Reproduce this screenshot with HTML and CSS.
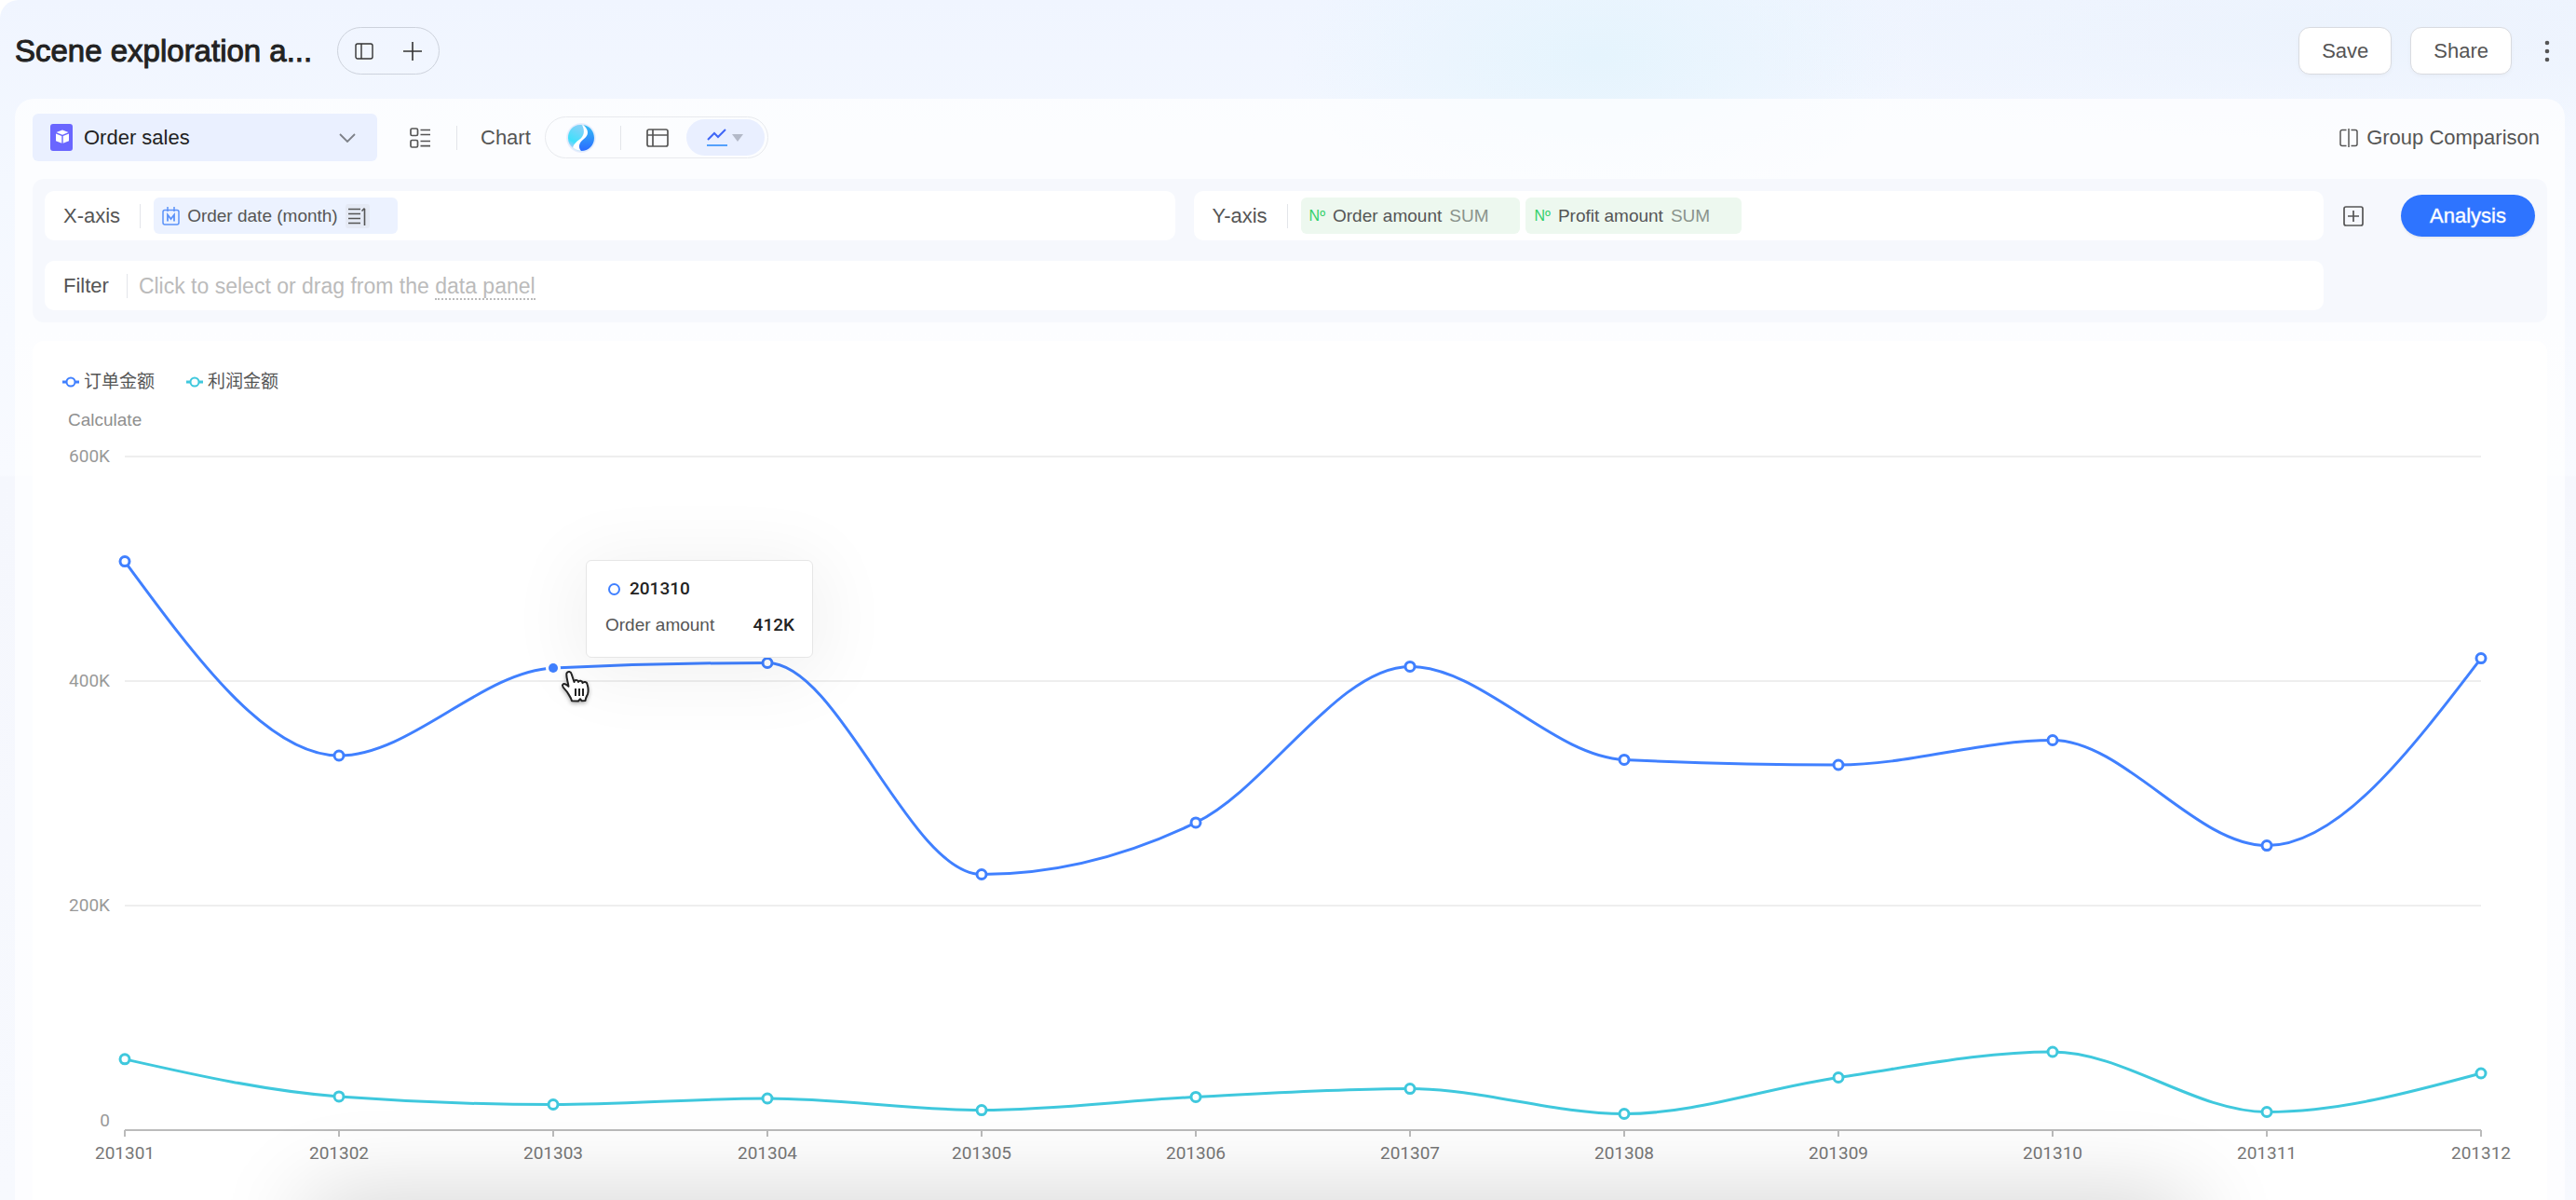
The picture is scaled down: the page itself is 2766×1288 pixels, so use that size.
FILE: index.html
```html
<!DOCTYPE html>
<html lang="en">
<head>
<meta charset="utf-8">
<meta name="viewport" content="width=device-width, initial-scale=1">
<title>Scene exploration</title>
<link rel="stylesheet" href="styles.css">
</head>
<body>
<div class="app">
  <header class="header">
    <h1 class="title">Scene exploration a...</h1>
    <div class="title-tools">
      <button class="icon-btn" type="button" aria-label="Toggle panel">
        <svg width="20" height="20" viewBox="0 0 20 20" fill="none" stroke="#333" stroke-width="1.4"><rect x="1" y="2" width="18" height="16" rx="2"/><path d="M7 2v16"/></svg>
      </button>
      <button class="icon-btn" type="button" aria-label="Add">
        <svg width="20" height="20" viewBox="0 0 20 20" fill="none" stroke="#333" stroke-width="1.6"><path d="M10 0v20M0 10h20"/></svg>
      </button>
    </div>
    <div class="header-actions">
      <button class="btn" type="button">Save</button>
      <button class="btn" type="button">Share</button>
      <button class="icon-btn more" type="button" aria-label="More">
        <svg width="6" height="24" viewBox="0 0 6 24" fill="#555"><circle cx="3" cy="3" r="2.3"/><circle cx="3" cy="12" r="2.3"/><circle cx="3" cy="21" r="2.3"/></svg>
      </button>
    </div>
  </header>

  <main class="panel">
    <div class="toolbar">
      <button class="dataset" type="button">
        <svg width="24" height="29" viewBox="0 0 24 29"><rect width="24" height="29" rx="3" fill="#6a66ff"/><path fill="#fff" d="M13 6.5l6.500 2.500-6.500 2.700-6.500-2.700zM6 10.400l6.300 2.600v7.800L6 18.300zM20 10.400v7.900l-6.300 2.500V13z"/></svg>
        <span>Order sales</span>
        <svg class="chevron" width="18" height="10" viewBox="0 0 18 10" fill="none" stroke="#7d8088" stroke-width="1.8"><path d="M1 1l8 8 8-8"/></svg>
      </button>
      <button class="icon-btn list-btn" type="button" aria-label="Field list">
        <svg width="22" height="22" viewBox="0 0 22 22" fill="none" stroke="#555" stroke-width="1.700"><rect x="1" y="1" width="7.500" height="7.500" rx="1.500"/><rect x="1" y="13.500" width="7.500" height="7.500" rx="1.500"/><path d="M11.500 2.500H22M11.500 7.500H22M11.500 14.500H22M11.500 19.700H22"/></svg>
      </button>
      <span class="divider"></span>
      <span class="chart-label">Chart</span>
      <div class="chart-types">
        <button class="icon-btn orb" type="button" aria-label="Smart chart">
          <svg width="32" height="32" viewBox="0 0 32 32">
            <defs>
              <linearGradient id="orbLeft" x1="0" y1="1" x2="0.400" y2="0"><stop offset="0" stop-color="#c9c4fb"/><stop offset="0.350" stop-color="#3fe0fb"/><stop offset="1" stop-color="#7fd2f8"/></linearGradient>
              <linearGradient id="orbRight" x1="0.500" y1="0" x2="0.500" y2="1"><stop offset="0" stop-color="#35bdf5"/><stop offset="1" stop-color="#2a6bff"/></linearGradient>
              <radialGradient id="orbGlow"><stop offset="0.800" stop-color="#b9e8fd"/><stop offset="1" stop-color="#e3e3fb" stop-opacity="0.500"/></radialGradient>
            </defs>
            <circle cx="16" cy="16" r="16" fill="url(#orbGlow)"/>
            <circle cx="16" cy="16" r="13.500" fill="#fff"/>
            <path fill="url(#orbLeft)" d="M17 2.200C8 1 2 8 2 16c0 5 2 8 5 10.500 1-4 3.500-6 7.500-9 4.500-3.500 6-9 2.500-15.300z"/>
            <path fill="url(#orbRight)" d="M18.500 2.200C25 3 30 9 30 16c0 8-6 14-14 14-3.500-4-2.500-8.500 2.500-12.500 6-4.500 6-10 0-15.300z"/>
          </svg>
        </button>
        <span class="divider"></span>
        <button class="icon-btn table-btn" type="button" aria-label="Table">
          <svg width="24" height="20" viewBox="0 0 24 20" fill="none" stroke="#555" stroke-width="1.700"><rect x="1" y="1" width="22" height="18" rx="2"/><path d="M1 7h22M7 1v18"/></svg>
        </button>
        <button class="line-btn" type="button" aria-label="Line chart">
          <svg width="40" height="20" viewBox="0 0 40 20" fill="none"><path d="M1 12l7-7 4 4 8-8" stroke="#3f66f6" stroke-width="2"/><path d="M0 18h22" stroke="#54a0fb" stroke-width="2"/><path d="M27 6h12l-6 8z" fill="#b3b9c8"/></svg>
        </button>
      </div>
      <button class="compare" type="button">
        <svg width="20" height="20" viewBox="0 0 20 20" fill="none" stroke="#555" stroke-width="1.500"><path d="M7.500 1.500H3a2 2 0 0 0-2 2v13a2 2 0 0 0 2 2h4.500M10 0v20M12.500 1.500H17a2 2 0 0 1 2 2v13a2 2 0 0 1-2 2h-4.500"/></svg>
        <span>Group Comparison</span>
      </button>
    </div>

    <section class="config">
      <div class="fields">
        <div class="field">
          <span class="field-label">X-axis</span>
          <span class="divider"></span>
          <span class="chip chip-date">
            <svg width="19" height="20" viewBox="0 0 19 20" fill="none" stroke="#5b92f9" stroke-width="1.500"><rect x="1" y="3.500" width="17" height="15.500" rx="2"/><path d="M6 0v5M13 0v5"/><path d="M6 15.500V8.500L9.500 13 13 8.500v7" stroke-width="1.800"/></svg>
            <span>Order date (month)</span>
            <span class="sort">
              <svg width="20" height="20" viewBox="0 0 20 20" fill="none" stroke="#555" stroke-width="1.600"><path d="M0 2.500h13M0 7.500h13M0 12.500h13M0 17.500h13M17.500 20V2M14.500 4.500L17.500 1.500"/></svg>
            </span>
          </span>
        </div>
        <div class="field">
          <span class="field-label">Y-axis</span>
          <span class="divider"></span>
          <span class="chip chip-num"><span class="num">Nº</span><span>Order amount</span><span class="agg">SUM</span></span>
          <span class="chip chip-num"><span class="num">Nº</span><span>Profit amount</span><span class="agg">SUM</span></span>
        </div>
        <div class="field filter">
          <span class="field-label">Filter</span>
          <span class="divider"></span>
          <span class="hint">Click to select or drag from the <a class="hint-link" href="#data">data panel</a></span>
        </div>
      </div>
      <div class="config-actions">
        <button class="icon-btn" type="button" aria-label="Add field">
          <svg width="22" height="22" viewBox="0 0 22 22" fill="none" stroke="#555" stroke-width="1.700"><rect x="1" y="1" width="20" height="20" rx="2"/><path d="M11 5v12M5 11h12"/></svg>
        </button>
        <button class="analysis" type="button">Analysis</button>
      </div>
    </section>

    <section class="card">
      <div class="legend">
        <span class="legend-item"><svg width="18" height="12" viewBox="0 0 18 12" fill="none" stroke="#4080ff" stroke-width="2"><path d="M0 6h4M14 6h4" stroke-width="3"/><circle cx="9" cy="6" r="4.500"/></svg>订单金额</span>
        <span class="legend-item"><svg width="18" height="12" viewBox="0 0 18 12" fill="none" stroke="#3fc8dd" stroke-width="2"><path d="M0 6h4M14 6h4" stroke-width="3"/><circle cx="9" cy="6" r="4.500"/></svg>利润金额</span>
      </div>
      <div class="plot">
        <svg id="chart" class="chart" viewBox="0 0 2700 840" role="img" aria-label="Order amount and profit amount by month">
          <text class="axis-name" x="38" y="32">Calculate</text>
        </svg>
        <div class="tooltip">
          <div class="tooltip-title"><span class="ring"></span>201310</div>
          <div class="tooltip-row"><span>Order amount</span><strong>412K</strong></div>
        </div>
        <svg class="cursor" width="32" height="37" viewBox="0 0 32 37" fill="#fff" stroke="#222" stroke-width="2" stroke-linejoin="round"><path d="M6.500 3.500C8 1 11 2 11.500 4l3 9c.5-3 4-2.500 4.500 0 .8-2 4.200-1.600 4.600 1 1-1.700 4.600-1.500 5 1.500 1.200 4 1.400 7 .4 10.500-.7 2-2 3-2.500 7l-4 .2-1.500-2-2 2.300-7-.2c-1-4-3-6-5-9.500-1.500-2.500-5.500-5-5-7.500 1-2.500 4-1 6.500 1.500C8 13 5.500 7 6.500 3.500z"/><path d="M16 20v8M20 20v8M24 20v8" fill="none"/></svg>
      </div>
    </section>
  </main>
  <div class="window-shadow"></div>
</div>
<script src="script.js"></script>
</body>
</html>
```
FILE: styles.css
```css
* { box-sizing: border-box; }

body {
  margin: 0;
  background: #fff;
  color: #555;
  font: 22px/28px "Liberation Sans", "Noto Sans CJK SC", sans-serif;
}

button {
  padding: 0;
  border: 0;
  background: none;
  color: inherit;
  font: inherit;
}

svg { display: block; flex: none; }

.app {
  position: relative;
  display: flex;
  flex-direction: column;
  min-height: 100vh;
  padding: 0 12px 0 16px;
  overflow: hidden;
  border-top-left-radius: 20px;
  background:
    radial-gradient(ellipse 330px 170px at 62% 60px, #e5f4fd, transparent),
    radial-gradient(ellipse 700px 120px at 91% 30px, #ecf3fd, transparent),
    linear-gradient(#f0f5ff, #f4f8ff 200px, #f8faff 510px, #f5f7fd 512px, #f7f9fe);
}

.header {
  display: flex;
  align-items: center;
  height: 106px;
  padding-top: 3px;
}

.title {
  margin: 0;
  width: 318px;
  white-space: nowrap;
  color: #222;
  font-size: 33px;
  line-height: 40px;
  font-weight: 400;
  -webkit-text-stroke: 1px #222;
}

.title-tools {
  display: flex;
  justify-content: space-between;
  align-items: center;
  width: 110px;
  height: 51px;
  margin-left: 28px;
  padding: 0 18px;
  border: 1px solid #cdd2dc;
  border-radius: 26px;
}

.header-actions {
  display: flex;
  align-items: center;
  gap: 20px;
  margin-left: auto;
}

.btn {
  height: 51px;
  padding: 0 24px;
  border: 1px solid #d9dbe0;
  border-radius: 12px;
  background: #fff;
  box-shadow: 0 2px 4px rgba(0, 0, 0, .03);
}

.more { margin: 0 16px 0 15px; }

.panel {
  display: flex;
  flex: 1;
  flex-direction: column;
  padding: 16px 19px 0;
  border-radius: 20px 20px 0 0;
  background: rgba(255, 255, 255, .7);
}

.toolbar {
  display: flex;
  align-items: center;
  height: 51px;
}

.dataset {
  display: flex;
  align-items: center;
  gap: 12px;
  width: 370px;
  height: 51px;
  padding: 0 23px 0 19px;
  border-radius: 6px;
  background: #eaf0ff;
  color: #222;
}

.chevron { margin-left: auto; }

.divider {
  flex: none;
  width: 1px;
  height: 26px;
  background: #e3e5ea;
}

.list-btn { margin: 0 28px 0 35px; }

.chart-label { margin: 0 15px 0 25px; }

.chart-types {
  display: flex;
  align-items: center;
  width: 240px;
  height: 45px;
  padding: 0 3px 0 22px;
  border: 1px solid #e8eaee;
  border-radius: 23px;
}

.orb { margin-right: 26px; }

.table-btn { margin-left: 27px; }

.line-btn {
  display: flex;
  align-items: center;
  justify-content: center;
  width: 84px;
  height: 39px;
  margin-left: auto;
  border-radius: 20px;
  background: #e9efff;
}

.compare {
  display: flex;
  align-items: center;
  gap: 9px;
  margin-left: auto;
  padding-right: 8px;
}

.config {
  display: flex;
  margin-top: 19px;
  padding: 13px;
  border-radius: 12px;
  background: #f6f8fd;
}

.fields {
  display: grid;
  flex: 1;
  grid-template-columns: 1fr 1fr;
  gap: 22px 20px;
}

.field {
  display: flex;
  align-items: center;
  height: 53px;
  padding-left: 20px;
  border-radius: 10px;
  background: #fff;
}

.field-label { margin-right: 21px; }

.field .divider { margin-right: 14px; }

.filter { grid-column: 1 / -1; }

.filter .field-label { margin-right: 19px; }

.filter .divider { margin-right: 12px; }

.hint {
  color: #bbb;
  font-size: 23px;
}

.hint-link {
  border-bottom: 2px dotted #bbb;
  color: inherit;
  text-decoration: none;
}

.chip {
  display: flex;
  align-items: center;
  gap: 8px;
  height: 39px;
  padding: 0 30px 0 9px;
  border-radius: 6px;
  font-size: 19px;
}

.chip-date { background: #ecf2ff; }

.chip-num {
  margin-right: 6px;
  padding-right: 34px;
  background: #edf8ef;
}

.num {
  color: #33d06a;
  font-size: 16px;
}

.agg { color: #8a938c; }

.sort {
  display: flex;
  align-items: center;
  justify-content: center;
  width: 26px;
  height: 26px;
  border-radius: 3px;
  background: #e5eaf5;
}

.config-actions {
  display: flex;
  align-items: center;
  gap: 40px;
  height: 53px;
  margin-left: 21px;
}

.analysis {
  width: 144px;
  height: 45px;
  border-radius: 23px;
  background: #2e74ff;
  box-shadow: 0 2px 2px rgba(0, 0, 0, .06);
  color: #fff;
  -webkit-text-stroke: 1px rgba(255, 255, 255, .4);
}

.card {
  flex: 1;
  margin-top: 20px;
  padding-top: 28px;
  border-radius: 12px 12px 0 0;
  background: #fff;
}

.legend {
  display: flex;
  gap: 34px;
  height: 31px;
  padding-left: 32px;
}

.legend-item {
  display: flex;
  align-items: center;
  gap: 5px;
  font-size: 19px;
}

.plot { position: relative; }

.chart {
  width: 100%;
  height: auto;
  font: 19px Roboto, sans-serif;
}

.axis-name {
  fill: #8f8f8f;
  font-family: "Liberation Sans", sans-serif;
}

.y-label { fill: #999; text-anchor: end; }

.x-label { fill: #777; text-anchor: middle; }

.grid-line { stroke: #eee; stroke-width: 2; }

.axis-line { fill: none; stroke: #bbb; stroke-width: 2; }

.series { fill: none; stroke-width: 3; }

.point { fill: #fff; stroke-width: 3; }

.halo { fill: #fff; }

.orders { stroke: #4080ff; }

.profit { stroke: #3fc8dd; }

.active-point { fill: #4080ff; }

.tooltip {
  position: absolute;
  left: 22%;
  top: 21%;
  width: 244px;
  height: 105px;
  padding: 16px 19px 0 20px;
  border: 1px solid #e6e6e6;
  border-radius: 6px;
  background: #fff;
  box-shadow: 0 10px 80px 10px rgba(0, 0, 0, .06);
  font-size: 19px;
}

.tooltip-title {
  display: flex;
  align-items: center;
  gap: 10px;
  color: #222;
  font-family: Roboto, sans-serif;
  font-weight: 500;
}

.ring {
  width: 13px;
  height: 13px;
  margin-left: 3px;
  border: 2px solid #4080ff;
  border-radius: 50%;
}

.tooltip-row {
  display: flex;
  justify-content: space-between;
  margin-top: 11px;
}

.tooltip-row strong {
  color: #222;
  font-family: Roboto, sans-serif;
  font-weight: 500;
}

.cursor {
  position: absolute;
  left: 21%;
  top: 35%;
  filter: drop-shadow(0 2px 2px rgba(0, 0, 0, .3));
}

.window-shadow {
  position: absolute;
  left: 12%;
  right: 15%;
  top: 100%;
  height: 80px;
  box-shadow: 0 0 100px rgba(0, 0, 0, .2);
}
```
FILE: script.js
```js
const svg = document.getElementById('chart');
const left = 99, step = 230, base = 788, unit = 1.205;
const orders = [506.6, 333.6, 411.6, 416.2, 227.8, 273.9, 412.9, 329.9, 325.3, 347.3, 253.5, 420.3];
const profit = [63.2, 29.9, 22.8, 28.2, 17.8, 29.5, 36.9, 14.5, 46.9, 69.7, 16.2, 50.6];
const right = left + step * (orders.length - 1);

function add(tag, attrs, text) {
  const node = document.createElementNS('http://www.w3.org/2000/svg', tag);
  for (const key in attrs) node.setAttribute(key, attrs[key]);
  if (text !== undefined) node.textContent = text;
  svg.appendChild(node);
}

// Monotone cubic interpolation between evenly spaced points.
function curve(ys) {
  const n = ys.length;
  const s = ys.slice(1).map((y, i) => (y - ys[i]) / step);
  const t = ys.map((_, i) => {
    if (i === 0 || i === n - 1) return 0;
    const a = s[i - 1], b = s[i];
    return (Math.sign(a) + Math.sign(b)) * Math.min(Math.abs(a), Math.abs(b), Math.abs(a + b) / 4);
  });
  t[0] = (3 * s[0] - t[1]) / 2;
  t[n - 1] = (3 * s[n - 2] - t[n - 2]) / 2;
  let d = `M${left},${ys[0]}`;
  for (let i = 1; i < n; i++) {
    const x = left + step * i, h = step / 3;
    d += `C${x - step + h},${ys[i - 1] + h * t[i - 1]} ${x - h},${ys[i] - h * t[i]} ${x},${ys[i]}`;
  }
  return d;
}

for (const value of [600, 400, 200]) {
  const y = base - value * unit;
  add('line', { class: 'grid-line', x1: left, x2: right, y1: y, y2: y });
  add('text', { class: 'y-label', x: 83, y: y + 6 }, value + 'K');
}
add('text', { class: 'y-label', x: 83, y: base - 4 }, '0');

let axis = `M${left},${base}H${right}`;
orders.forEach((_, i) => {
  const x = left + step * i;
  axis += `M${x},${base}v7`;
  add('text', { class: 'x-label', x, y: base + 31 }, 201301 + i);
});
add('path', { class: 'axis-line', d: axis });

for (const [name, data] of [['orders', orders], ['profit', profit]]) {
  const ys = data.map(v => base - v * unit);
  add('path', { class: 'series ' + name, d: curve(ys) });
  ys.forEach((cy, i) => {
    const cx = left + step * i;
    if (name === 'orders' && i === 2) {
      add('circle', { class: 'halo', cx, cy, r: 8 });
      add('circle', { class: 'active-point', cx, cy, r: 5 });
    } else {
      add('circle', { class: 'point ' + name, cx, cy, r: 5 });
    }
  });
}
```
